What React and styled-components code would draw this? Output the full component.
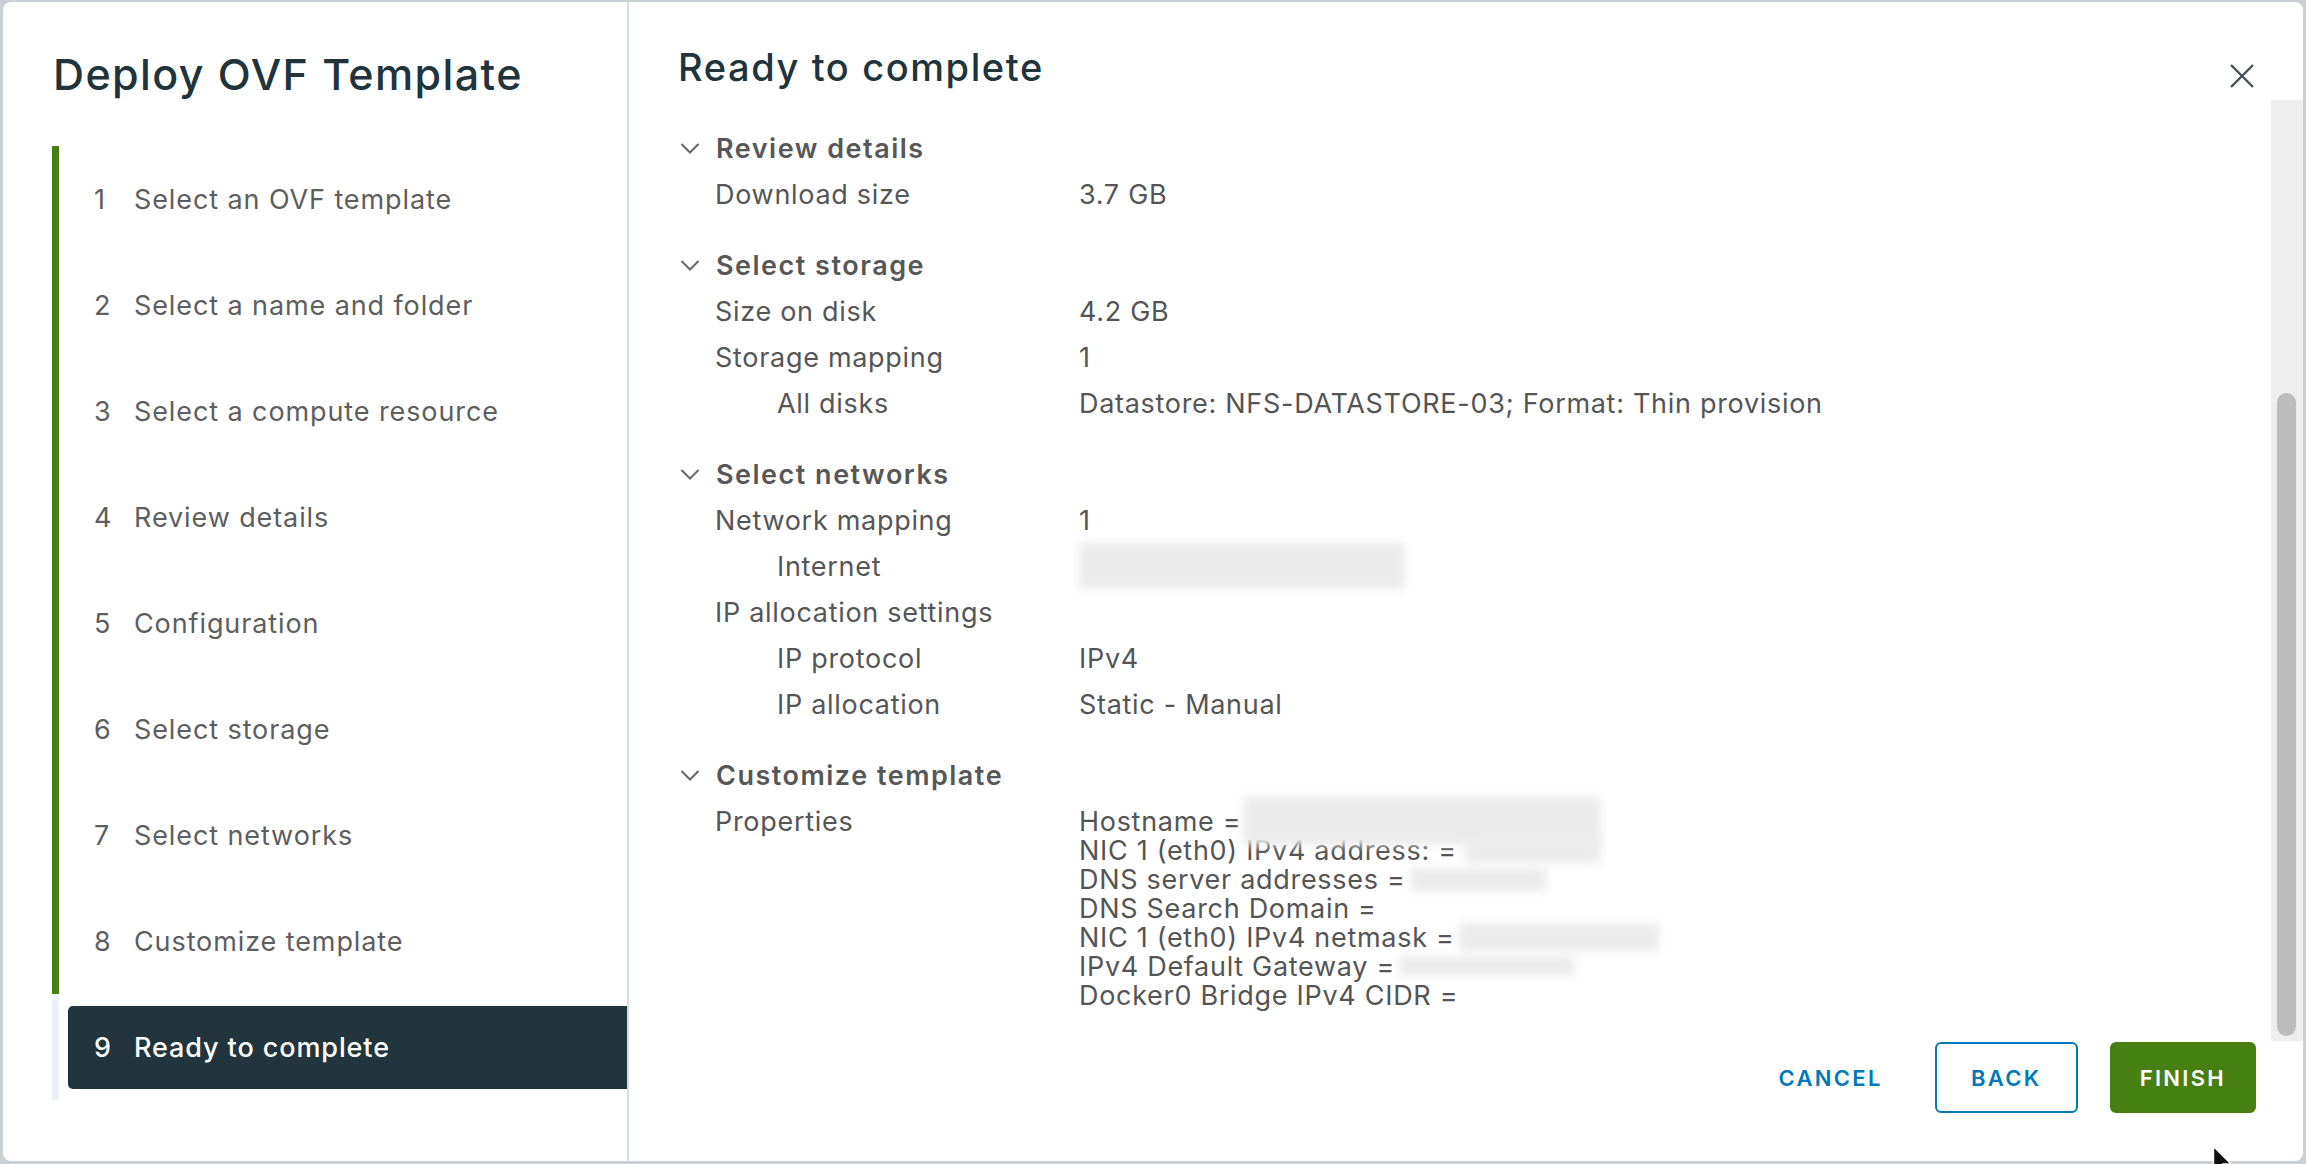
import React from "react";
import styled, { createGlobalStyle } from "styled-components";

const GlobalStyle = createGlobalStyle`
  html, body {
    margin: 0;
    padding: 0;
    background: #c9d1d5;
  }
  * {
    box-sizing: border-box;
  }
`;

const Page = styled.div`
  position: relative;
  width: 2306px;
  height: 1164px;
  padding: 2px 3px 3px 3px;
  background: #c9d1d5;
  font-family: Inter, "Noto Sans", sans-serif;
  overflow: hidden;
`;

const Modal = styled.div`
  display: flex;
  height: 100%;
  background: #ffffff;
  border-radius: 8px;
  overflow: hidden;
`;

const Sidebar = styled.div`
  width: 626px;
  flex-shrink: 0;
  border-right: 2px solid #d7dee2;
  padding-left: 49px;
  display: flex;
  flex-direction: column;
`;

const SidebarTitle = styled.h1`
  margin: 44px 0 44px 1px;
  font-size: 43px;
  line-height: 56px;
  font-weight: 500;
  color: #21333b;
  letter-spacing: 1.4px;
`;

const StepList = styled.div`
  display: flex;
  flex-direction: column;
`;

const Step = styled.div`
  height: 106px;
  display: flex;
  align-items: center;
  padding-left: 9px;
  border-left: 7px solid ${(p) => (p.$done ? "#468012" : "#eef2f4")};
`;

const StepBox = styled.div`
  flex: 1;
  height: 83px;
  display: flex;
  align-items: center;
  padding-left: 26px;
  border-radius: 5px 0 0 5px;
  background: ${(p) => (p.$active ? "#22343c" : "transparent")};
  color: ${(p) => (p.$active ? "#ffffff" : "#5e5e5e")};
  font-size: 27px;
  font-weight: ${(p) => (p.$active ? 500 : 400)};
  letter-spacing: 0.9px;
`;

const StepNum = styled.span`
  width: 40px;
`;

const Main = styled.div`
  flex: 1;
  display: flex;
  flex-direction: column;
  min-width: 0;
`;

const Header = styled.div`
  height: 98px;
  display: flex;
  justify-content: space-between;
  padding: 0 49px 0 49px;
`;

const Heading = styled.h2`
  margin: 43px 0 0 0;
  font-size: 38px;
  line-height: 44px;
  font-weight: 500;
  color: #21333b;
  letter-spacing: 1.6px;
`;

const CloseButton = styled.button`
  margin-top: 62px;
  width: 24px;
  height: 24px;
  padding: 0;
  border: 0;
  background: none;
  color: #3f5059;
  cursor: pointer;
`;

const Body = styled.div`
  height: 941px;
  display: flex;
`;

const Content = styled.div`
  flex: 1;
  padding: 25px 0 0 49px;
  color: #565656;
  font-size: 27px;
  letter-spacing: 0.7px;
`;

const Section = styled.div`
  margin-bottom: 25px;
`;

const SectionHeader = styled.div`
  height: 46px;
  display: flex;
  align-items: center;
  gap: 14px;
  font-weight: 600;
  color: #575757;
  letter-spacing: 1.5px;
  svg {
    flex-shrink: 0;
  }
`;

const Row = styled.div`
  display: grid;
  grid-template-columns: ${(p) => 364 - (p.$nested ? 62 : 0)}px 1fr;
  padding: 8.5px 0 8.5px ${(p) => (p.$nested ? 99 : 37)}px;
  line-height: 29px;
`;

const Value = styled.div`
  color: #555555;
`;

const Line = styled.div`
  display: flex;
  align-items: center;
  height: 29px;
  white-space: pre;
`;

const Redacted = styled.span`
  display: inline-block;
  width: ${(p) => p.$w}px;
  height: ${(p) => p.$h}px;
  margin-left: ${(p) => p.$ml || 0}px;
  background: #ebebeb;
  filter: blur(4px);
  border-radius: 4px;
`;

const RedactedBlock = styled(Redacted)`
  display: block;
  margin: -8.5px 0;
`;

const Track = styled.div`
  width: 32px;
  background: #eeeeee;
  padding: 293px 0 0 6px;
`;

const Thumb = styled.div`
  width: 19px;
  height: 643px;
  border-radius: 10px;
  background: #bcbcbc;
`;

const Footer = styled.div`
  flex: 1;
  display: flex;
  justify-content: flex-end;
  align-items: flex-start;
  gap: 32px;
  padding: 1px 47px 0 0;
`;

const Button = styled.button`
  min-width: 143px;
  height: 71px;
  padding: 0 ${(p) => (p.$variant ? 28 : 18)}px;
  border-radius: 6px;
  font-family: Inter, "Noto Sans", sans-serif;
  font-size: 22px;
  font-weight: 600;
  letter-spacing: 2.3px;
  cursor: pointer;
  border: 2px solid
    ${(p) => (p.$variant === "outline" ? "#0079b8" : p.$variant === "primary" ? "#468012" : "transparent")};
  background: ${(p) => (p.$variant === "primary" ? "#468012" : "#ffffff")};
  color: ${(p) => (p.$variant === "primary" ? "#ffffff" : "#0079b8")};
`;

const Cursor = styled.svg`
  position: absolute;
  left: 2212px;
  top: 1145px;
`;

const steps = [
  "Select an OVF template",
  "Select a name and folder",
  "Select a compute resource",
  "Review details",
  "Configuration",
  "Select storage",
  "Select networks",
  "Customize template",
  "Ready to complete",
];

const Chevron = () => (
  <svg width="24" height="24" viewBox="0 0 24 24" fill="none">
    <path d="M3.5 8 L12 16.5 L20.5 8" stroke="#666666" strokeWidth="2" />
  </svg>
);

const sections = [
  {
    title: "Review details",
    rows: [{ label: "Download size", value: "3.7 GB" }],
  },
  {
    title: "Select storage",
    rows: [
      { label: "Size on disk", value: "4.2 GB" },
      { label: "Storage mapping", value: "1" },
      {
        label: "All disks",
        value: "Datastore: NFS-DATASTORE-03; Format: Thin provision",
        nested: true,
      },
    ],
  },
  {
    title: "Select networks",
    rows: [
      { label: "Network mapping", value: "1" },
      { label: "Internet", redact: { w: 326, h: 46 }, nested: true },
      { label: "IP allocation settings", value: "" },
      { label: "IP protocol", value: "IPv4", nested: true },
      { label: "IP allocation", value: "Static - Manual", nested: true },
    ],
  },
];

const properties = [
  { text: "Hostname =", redact: { w: 358, h: 48, ml: 2 } },
  { text: "NIC 1 (eth0) IPv4 address: =", redact: { w: 136, h: 25, ml: 8 } },
  { text: "DNS server addresses =", redact: { w: 136, h: 23, ml: 4 } },
  { text: "DNS Search Domain =" },
  { text: "NIC 1 (eth0) IPv4 netmask =", redact: { w: 200, h: 28, ml: 4 } },
  { text: "IPv4 Default Gateway =", redact: { w: 176, h: 20, ml: 4 } },
  { text: "Docker0 Bridge IPv4 CIDR =" },
];

export default function App() {
  return (
    <>
      <GlobalStyle />
      <Page>
        <Modal>
          <Sidebar>
            <SidebarTitle>Deploy OVF Template</SidebarTitle>
            <StepList>
              {steps.map((s, i) => {
                const active = i === steps.length - 1;
                return (
                  <Step key={s} $done={!active}>
                    <StepBox $active={active}>
                      <StepNum>{i + 1}</StepNum>
                      {s}
                    </StepBox>
                  </Step>
                );
              })}
            </StepList>
          </Sidebar>

          <Main>
            <Header>
              <Heading>Ready to complete</Heading>
              <CloseButton aria-label="Close">
                <svg width="24" height="24" viewBox="0 0 24 24" fill="none">
                  <path d="M1 1 L23 23 M23 1 L1 23" stroke="currentColor" strokeWidth="2.4" />
                </svg>
              </CloseButton>
            </Header>

            <Body>
              <Content>
                {sections.map((sec) => (
                  <Section key={sec.title}>
                    <SectionHeader>
                      <Chevron />
                      {sec.title}
                    </SectionHeader>
                    {sec.rows.map((r) => (
                      <Row key={r.label} $nested={r.nested}>
                        <div>{r.label}</div>
                        <Value>
                          {r.redact ? <RedactedBlock $w={r.redact.w} $h={r.redact.h} /> : r.value}
                        </Value>
                      </Row>
                    ))}
                  </Section>
                ))}
                <Section>
                  <SectionHeader>
                    <Chevron />
                    Customize template
                  </SectionHeader>
                  <Row>
                    <div>Properties</div>
                    <Value>
                      {properties.map((p) => (
                        <Line key={p.text}>
                          {p.text}
                          {p.redact && <Redacted $w={p.redact.w} $h={p.redact.h} $ml={p.redact.ml} />}
                        </Line>
                      ))}
                    </Value>
                  </Row>
                </Section>
              </Content>
              <Track>
                <Thumb />
              </Track>
            </Body>

            <Footer>
              <Button>CANCEL</Button>
              <Button $variant="outline">BACK</Button>
              <Button $variant="primary">FINISH</Button>
            </Footer>
          </Main>
        </Modal>
        <Cursor width="22" height="30" viewBox="0 0 22 30">
          <path d="M1.5 1.5 L1.5 26 L7.5 20 L11.5 29 L15 27.5 L11 19 L19 19 Z" fill="#111" stroke="#fff" strokeWidth="1.4" />
        </Cursor>
      </Page>
    </>
  );
}
